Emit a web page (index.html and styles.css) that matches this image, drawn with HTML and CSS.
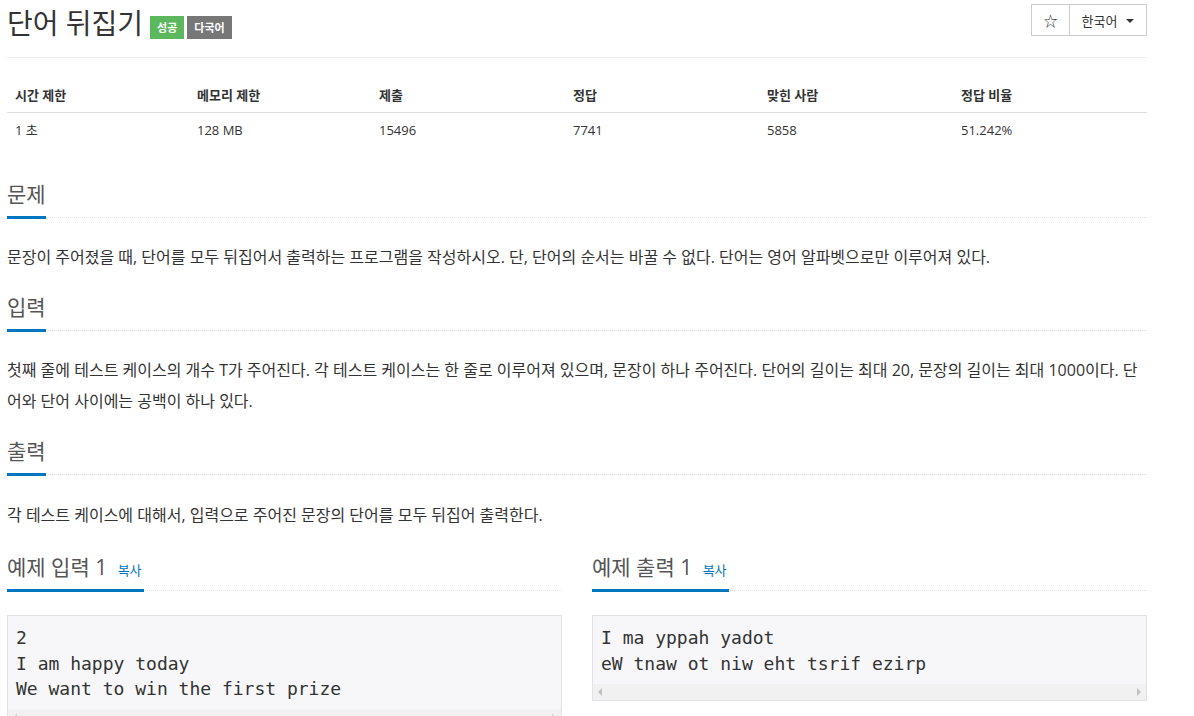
FILE: index.html
```html
<!DOCTYPE html>
<html lang="ko">
<head>
<meta charset="utf-8">
<title>단어 뒤집기</title>
<link rel="stylesheet" href="styles.css">
</head>
<body>
<div class="container">
  <div class="page-header">
    <h1 class="title">
      <span class="title-text">단어 뒤집기</span>
      <span class="label label-success">성공</span>
      <span class="label label-default">다국어</span>
    </h1>
    <div class="btn-group">
      <span class="btn btn-star">☆</span>
      <span class="btn btn-lang">한국어 <span class="caret"></span></span>
    </div>
  </div>

  <table class="info">
    <thead>
      <tr>
        <th class="c1">시간 제한</th>
        <th class="c2">메모리 제한</th>
        <th class="c3">제출</th>
        <th class="c4">정답</th>
        <th class="c5">맞힌 사람</th>
        <th class="c6">정답 비율</th>
      </tr>
    </thead>
    <tbody>
      <tr>
        <td>1 초</td>
        <td>128 MB</td>
        <td>15496</td>
        <td>7741</td>
        <td>5858</td>
        <td>51.242%</td>
      </tr>
    </tbody>
  </table>

  <section class="sec first">
    <h2 class="headline"><span class="hl">문제</span></h2>
    <p class="desc">문장이 주어졌을 때, 단어를 모두 뒤집어서 출력하는 프로그램을 작성하시오. 단, 단어의 순서는 바꿀 수 없다. 단어는 영어 알파벳으로만 이루어져 있다.</p>
  </section>

  <section class="sec">
    <h2 class="headline"><span class="hl">입력</span></h2>
    <p class="desc">첫째 줄에 테스트 케이스의 개수 T가 주어진다. 각 테스트 케이스는 한 줄로 이루어져 있으며, 문장이 하나 주어진다. 단어의 길이는 최대 20, 문장의 길이는 최대 1000이다. 단어와 단어 사이에는 공백이 하나 있다.</p>
  </section>

  <section class="sec">
    <h2 class="headline"><span class="hl">출력</span></h2>
    <p class="desc last">각 테스트 케이스에 대해서, 입력으로 주어진 문장의 단어를 모두 뒤집어 출력한다.</p>
  </section>

  <div class="samples">
    <section class="sample">
      <h2 class="headline sample-head"><span class="hl">예제 입력 1 <a class="copy">복사</a></span></h2>
      <div class="pre">
        <div class="code">2
I am happy today
We want to win the first prize</div>
        <div class="scrollbar"><span class="arr arr-l"></span><span class="arr arr-r"></span></div>
      </div>
    </section>
    <section class="sample">
      <h2 class="headline sample-head"><span class="hl">예제 출력 1 <a class="copy">복사</a></span></h2>
      <div class="pre">
        <div class="code">I ma yppah yadot
eW tnaw ot niw eht tsrif ezirp</div>
        <div class="scrollbar"><span class="arr arr-l"></span><span class="arr arr-r"></span></div>
      </div>
    </section>
  </div>
</div>
</body>
</html>
```
FILE: styles.css
```css
html, body {
  margin: 0;
  padding: 0;
  background: #fff;
}
body {
  font-family: "Open Sans", "Noto Sans CJK KR", sans-serif;
  color: #333;
  font-size: 15px;
}
.container {
  width: 1140px;
  padding-left: 7px;
}
.page-header {
  display: flex;
  justify-content: space-between;
  align-items: flex-start;
  height: 57px;
  border-bottom: 1px solid #eee;
}
.title {
  margin: 0;
  padding-top: 7px;
  display: flex;
  align-items: center;
  font-weight: 400;
}
.title-text {
  font-size: 28px;
  line-height: 30px;
  color: #333;
  margin-right: 7px;
}
.label {
  display: inline-block;
  font-size: 11px;
  line-height: 11px;
  font-weight: 700;
  color: #fff;
  padding: 6px 7px;
  margin-top: 9px;
  margin-right: 3px;
}
.label-success { background: #5cb85c; }
.label-default { background: #777; }

.btn-group {
  display: flex;
  margin-top: 4px;
}
.btn {
  display: flex;
  align-items: center;
  justify-content: center;
  height: 30px;
  border: 1px solid #ccc;
  font-size: 13px;
  color: #333;
  background: #fff;
}
.btn-star {
  width: 37px;
  font-size: 14px;
}
.btn-lang {
  width: 76px;
  border-left: none;
  gap: 9px;
}
.caret {
  display: inline-block;
  width: 0;
  height: 0;
  border-left: 4px solid transparent;
  border-right: 4px solid transparent;
  border-top: 4px solid #333;
  margin-top: 1px;
}

.info {
  width: 1140px;
  border-collapse: collapse;
  margin-top: 20px;
  font-size: 13px;
  line-height: 18px;
}
.info th, .info td {
  text-align: left;
  padding: 8px;
}
.info th {
  font-weight: 700;
  border-bottom: 1px solid #ddd;
}
.c1, .c2 { width: 166px; }
.c3, .c4, .c5, .c6 { width: 178px; }

.sec {
  margin-top: 23px;
}
.sec.first {
  margin-top: 36px;
}
.headline {
  margin: 0;
  font-size: 21px;
  line-height: 23px;
  font-weight: 400;
  color: #555;
  border-bottom: 1px dotted #ddd;
}
.hl {
  display: inline-block;
  padding-bottom: 10px;
  border-bottom: 3px solid #0076c0;
  margin-bottom: -2px;
}
.desc {
  margin: 24px 0 0;
  font-size: 16px;
  line-height: 31px;
}
.desc.last {
  margin-top: 25px;
}

.samples {
  display: grid;
  grid-template-columns: 555px 555px;
  column-gap: 30px;
  margin-top: 25px;
}
.sample-head .hl {
  padding-bottom: 10px;
  padding-right: 2px;
}
.copy {
  font-size: 13px;
  line-height: 13px;
  color: #0076c0;
  margin-left: 5px;
}
.pre {
  margin-top: 24px;
  border: 1px solid #e1e1e6;
  background: #f7f7f9;
}
.code {
  font-family: "DejaVu Sans Mono", monospace;
  font-size: 18px;
  line-height: 25.5px;
  color: #333;
  white-space: pre;
  padding: 9px 8px 8px;
}
.scrollbar {
  height: 16px;
  background: #f1f1f1;
  display: flex;
  justify-content: space-between;
  align-items: center;
  padding: 0 5px;
}
.arr {
  width: 0;
  height: 0;
  border-top: 4px solid transparent;
  border-bottom: 4px solid transparent;
}
.arr-l { border-right: 4px solid #c1c1c1; }
.arr-r { border-left: 4px solid #c1c1c1; }
```
